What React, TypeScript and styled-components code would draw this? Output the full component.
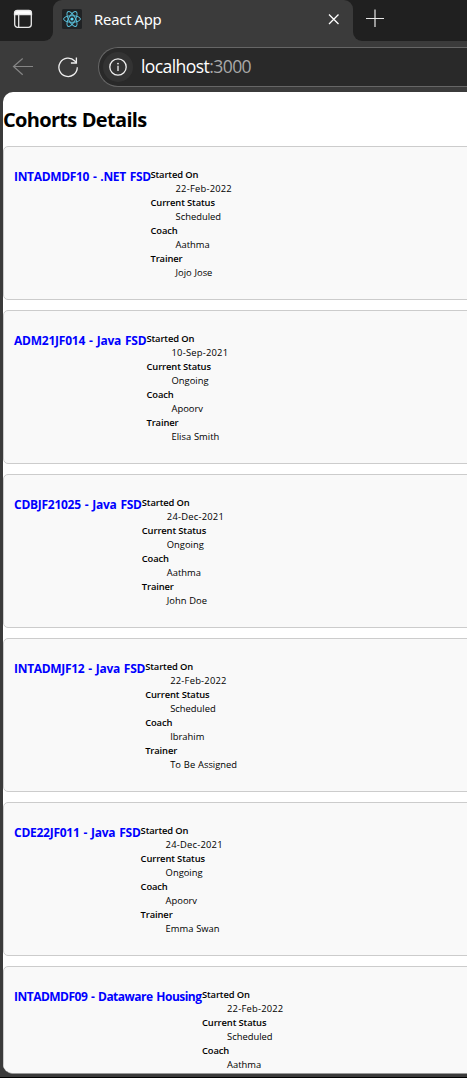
import React from "react";
import styled, { createGlobalStyle } from "styled-components";

const Global = createGlobalStyle`
  * { box-sizing: border-box; }
  body { margin: 0; background: #3b3b3b; overflow: hidden; font-family: "Open Sans", "Noto Sans", sans-serif; }
`;

const Window = styled.div`
  display: flex;
  flex-direction: column;
  width: 467px;
  height: 1078px;
  overflow: hidden;
  background: #3b3b3b;
  border-bottom: 1px solid #000;
`;

const TabStrip = styled.div`
  display: flex;
  flex: none;
  height: 41px;
  background: #3b3b3b;
`;

const StripStart = styled.div`
  display: flex;
  width: 53px;
  padding: 9px 0 0 13px;
  background: #202020;
  border-bottom-right-radius: 9px;
`;

const TabBack = styled.div`
  width: 300px;
  background: linear-gradient(#202020 0 50%, #3b3b3b 50% 100%);
`;

const Tab = styled.div`
  display: flex;
  align-items: center;
  height: 41px;
  padding: 0 13px 3px 9px;
  background: #3b3b3b;
  border-radius: 9px 9px 0 0;
`;

const TabTitle = styled.span`
  flex: 1;
  margin: -1px 0 0 12px;
  color: #fff;
  font-size: 14.8px;
  letter-spacing: -0.2px;
  word-spacing: -0.5px;
  font-family: "Noto Sans", sans-serif;
`;

const StripEnd = styled.div`
  flex: 1;
  padding: 9px 0 0 13px;
  background: #202020;
  border-bottom-left-radius: 9px;
`;

const Toolbar = styled.div`
  display: flex;
  flex: none;
  align-items: center;
  height: 51px;
  padding: 1px 0 0 12px;
`;

const Reload = styled.div`
  display: flex;
  margin: 0 19px 0 24px;
`;

const AddressBar = styled.div`
  display: flex;
  flex: 1;
  align-items: center;
  height: 40px;
  padding-left: 4px;
  background: #292929;
  border: 1px solid #666;
  border-right: 0;
  border-radius: 20px 0 0 20px;
`;

const InfoButton = styled.div`
  display: flex;
  align-items: center;
  justify-content: center;
  width: 30px;
  height: 30px;
  border-radius: 50%;
  background: #333;
`;

const Url = styled.span`
  margin: -2px 0 0 8px;
  color: #fff;
  font-size: 17.6px;
  letter-spacing: -0.61px;
`;

const Port = styled.span`
  color: #a8a8a8;
`;

const Page = styled.main`
  flex: none;
  height: 982px;
  margin-left: 3px;
  overflow: hidden;
  background: #fff;
  border-bottom: 1px solid #999;
  border-radius: 10px 0 0 10px;
`;

const Heading = styled.h1`
  height: 54px;
  margin: 0;
  padding-top: 14px;
  color: #000;
  font-size: 20px;
  line-height: 27px;
  font-weight: 700;
  letter-spacing: -0.68px;
  word-spacing: 0.6px;
  white-space: nowrap;
`;

const Card = styled.section`
  display: flex;
  width: 480px;
  height: 154px;
  margin-bottom: 10px;
  padding: 20px 10px;
  background: #f9f9f9;
  border: 1px solid #ccc;
  border-radius: 5px;
`;

const CardTitle = styled.h3<{ $width: number; $spacing: number }>`
  flex: none;
  width: ${(p) => p.$width}px;
  margin: 1px 0 0;
  color: #0000ff;
  font-size: 12px;
  line-height: 18px;
  font-weight: 700;
  letter-spacing: ${(p) => p.$spacing}px;
  word-spacing: 1.1px;
  white-space: nowrap;
`;

const Details = styled.dl`
  margin: 1px 0 0;
  color: #000;
  font-size: 9.4px;
  line-height: 14px;
  white-space: nowrap;
`;

const Term = styled.dt`
  font-weight: 600;
  letter-spacing: -0.12px;
`;

const Value = styled.dd<{ $spacing?: number }>`
  margin: 0 0 0 25px;
  letter-spacing: ${(p) => p.$spacing ?? 0}px;
  word-spacing: 0.4px;
`;

interface Cohort {
  name: string;
  width: number;
  spacing: number;
  start: string;
  status: string;
  coach: string;
  trainer?: string;
}

const cohorts: Cohort[] = [
  { name: "INTADMDF10 - .NET FSD", width: 136.5, spacing: -0.33, start: "22-Feb-2022", status: "Scheduled", coach: "Aathma", trainer: "Jojo Jose" },
  { name: "ADM21JF014 - Java FSD", width: 132.5, spacing: -0.23, start: "10-Sep-2021", status: "Ongoing", coach: "Apoorv", trainer: "Elisa Smith" },
  { name: "CDBJF21025 - Java FSD", width: 127.8, spacing: -0.27, start: "24-Dec-2021", status: "Ongoing", coach: "Aathma", trainer: "John Doe" },
  { name: "INTADMJF12 - Java FSD", width: 131.2, spacing: -0.3, start: "22-Feb-2022", status: "Scheduled", coach: "Ibrahim", trainer: "To Be Assigned" },
  { name: "CDE22JF011 - Java FSD", width: 126.6, spacing: -0.26, start: "24-Dec-2021", status: "Ongoing", coach: "Apoorv", trainer: "Emma Swan" },
  { name: "INTADMDF09 - Dataware Housing", width: 188, spacing: -0.51, start: "22-Feb-2022", status: "Scheduled", coach: "Aathma" },
];

const TabMenuIcon = () => (
  <svg width="20" height="20" viewBox="0 0 20 20" fill="none" stroke="#e8e8e8" strokeWidth="1.3">
    <rect x="1.7" y="1.7" width="16.6" height="16.6" rx="2.8" />
    <path d="M1.5 5.5V4.3Q1.5 1.5 4.3 1.5H15.7Q18.5 1.5 18.5 4.3V5.5Z" fill="#fff" />
    <path d="M5.7 6V18" />
  </svg>
);

const ReactLogo = () => (
  <svg width="20" height="20" viewBox="0 0 20 20" fill="none" stroke="#58bdd8" strokeWidth="1">
    <rect width="20" height="20" rx="1.5" fill="#202224" stroke="none" />
    <ellipse cx="10" cy="10" rx="8.4" ry="3.3" />
    <ellipse cx="10" cy="10" rx="8.4" ry="3.3" transform="rotate(60 10 10)" />
    <ellipse cx="10" cy="10" rx="8.4" ry="3.3" transform="rotate(120 10 10)" />
    <circle cx="10" cy="10" r="1.6" fill="#61dafb" stroke="none" />
  </svg>
);

const CloseIcon = () => (
  <svg width="12" height="12" viewBox="0 0 12 12" stroke="#fff" strokeWidth="1.3">
    <path d="M1 1.5L10.5 11M10.5 1.5L1 11" />
  </svg>
);

const PlusIcon = () => (
  <svg width="18" height="19" viewBox="0 0 18 19" stroke="#e8e8e8" strokeWidth="1.2">
    <path d="M0 9.5H18M9 0.5V18" />
  </svg>
);

const BackIcon = () => (
  <svg width="22" height="20" viewBox="0 0 22 20" fill="none" stroke="#858585" strokeWidth="1.2">
    <path d="M21 9.5H1.5M10.7 1.5L1.5 9.5L10.7 17.8" />
  </svg>
);

const ReloadIcon = () => (
  <svg width="21" height="21" viewBox="0 0 21 21" fill="none" stroke="#eee" strokeWidth="1.3">
    <path d="M19.3 10.3A9.2 9.2 0 1 1 16.8 4L18.2 5.5" />
    <path d="M18.4 0.5V6H12.9" />
  </svg>
);

const InfoIcon = () => (
  <svg width="18" height="18" viewBox="0 0 18 18" fill="none" stroke="#eee" strokeWidth="1.3">
    <circle cx="9" cy="9" r="8.2" />
    <path d="M9 7.8V13" />
    <circle cx="9" cy="5.6" r="0.9" fill="#eee" stroke="none" />
  </svg>
);

export default function App() {
  return (
    <Window>
      <Global />
      <TabStrip>
        <StripStart><TabMenuIcon /></StripStart>
        <TabBack>
          <Tab>
            <ReactLogo />
            <TabTitle>React App</TabTitle>
            <CloseIcon />
          </Tab>
        </TabBack>
        <StripEnd><PlusIcon /></StripEnd>
      </TabStrip>
      <Toolbar>
        <BackIcon />
        <Reload><ReloadIcon /></Reload>
        <AddressBar>
          <InfoButton><InfoIcon /></InfoButton>
          <Url>localhost<Port>:3000</Port></Url>
        </AddressBar>
      </Toolbar>
      <Page>
        <Heading>Cohorts Details</Heading>
        {cohorts.map((c) => (
          <Card key={c.name}>
            <CardTitle $width={c.width} $spacing={c.spacing}>{c.name}</CardTitle>
            <Details>
              <Term>Started On</Term>
              <Value $spacing={0.22}>{c.start}</Value>
              <Term>Current Status</Term>
              <Value>{c.status}</Value>
              <Term>Coach</Term>
              <Value>{c.coach}</Value>
              {c.trainer && (
                <>
                  <Term>Trainer</Term>
                  <Value>{c.trainer}</Value>
                </>
              )}
            </Details>
          </Card>
        ))}
      </Page>
    </Window>
  );
}
